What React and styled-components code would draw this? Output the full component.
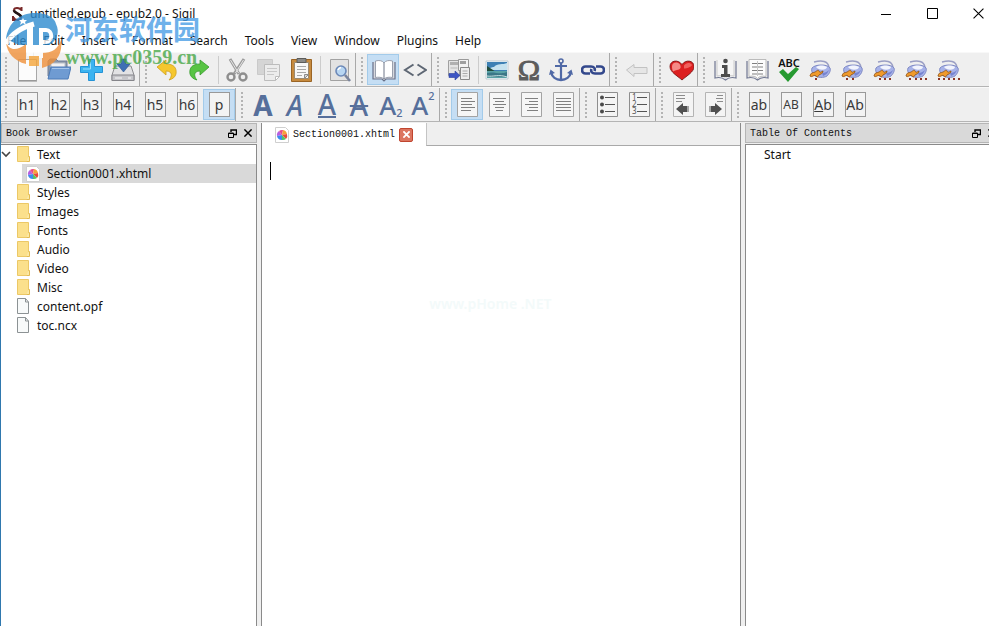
import React from 'react';
import styled, { createGlobalStyle } from 'styled-components';

const GlobalStyle = createGlobalStyle`
    * {
        box-sizing: border-box;
    }
    body {
        margin: 0;
        background: #ffffff;
    }
    button {
        border: 0;
        padding: 0;
        background: none;
        color: inherit;
        font: inherit;
    }
`;

const MENU = ['File', 'Edit', 'Insert', 'Format', 'Search', 'Tools', 'View', 'Window', 'Plugins', 'Help'];
const FOLDERS = ['Styles', 'Images', 'Fonts', 'Audio', 'Video', 'Misc'];
const FILES = ['content.opf', 'toc.ncx'];

/* ---------- icons ---------- */

const Icon = ({ children, size = 24 }) => (
    <svg width={size} height={size} viewBox={`0 0 ${size} ${size}`} fill="none" aria-hidden="true">
        {children}
    </svg>
);

const SigilLogo = () => (
    <svg width="13" height="16" viewBox="0 0 13 16" fill="none" aria-hidden="true">
        <path d="M10.5 1v4M10 4C9 1.5 3 .8 3 4.2c0 3 7 3.300 7 6.800 0 4.200-6.500 3.500-7.500.2M2 10v4.500" stroke="#7a2a2a" strokeWidth="2" />
        <path d="M3 4.200c0 3 7 3.300 7 6.800" stroke="#241818" strokeWidth="2.600" />
        <path d="M1 14.500h4" stroke="#7a2a2a" />
    </svg>
);

const NewIcon = () => (
    <Icon><path d="M3.500 1.500h18v21h-18z" fill="#fcfcfc" stroke="#a8a8a8" /><path d="M3 23h19" stroke="#888" /></Icon>
);

const OpenIcon = () => (
    <Icon>
        <path d="M1 3l2-2h6l2 2h9v15H1z" fill="#8b97a8" stroke="#70809a" />
        <path d="M4 5h14v5H4z" fill="#f1f1f1" stroke="#b8bec8" />
        <path d="M4 9h20l-3 12H1z" fill="#6f9bd2" stroke="#4c7bb8" />
        <path d="M5 10.500h17" stroke="#a9c8ec" />
    </Icon>
);

const AddIcon = () => (
    <Icon>
        <path d="M9.500 1.500h6v7h8v6h-8v8h-6v-8h-8v-6h8z" fill="#3bb3f0" stroke="#2493d6" />
        <path d="M11.500 4v7H4" stroke="#9be0fc" />
    </Icon>
);

const SaveIcon = () => (
    <Icon>
        <path d="M4 8h16l3 9v5.500H1V17z" fill="#e2e2e4" stroke="#8c8c90" />
        <path d="M1 17h22v5.500H1z" fill="#c6c6ca" stroke="#85858a" />
        <path d="M10 1h5v5h4l-6.500 8L6 6h4z" fill="#3f70b4" stroke="#2c568f" strokeWidth=".6" />
        <path d="M4 20h7M17 20h3" stroke="#fafafa" />
    </Icon>
);

const CurvedArrow = ({ fill, edge, flip }) => (
    <Icon>
        <g transform={flip ? 'translate(24 0) scale(-1 1)' : undefined}>
            <path d="M2 9l9-7v4c8 0 11 4 10 10-1 3-3 5-7 6 3-3 4-9-3-9v4z" fill={fill} stroke={edge} strokeWidth=".8" />
        </g>
    </Icon>
);

const CutIcon = () => (
    <Icon>
        <path d="M5 1l9 15M19 1L9 16" stroke="#9c9c9c" strokeWidth="3" />
        <path d="M5.500 2l8 13M18.500 2l-8 13" stroke="#e6e6e6" />
        <circle cx="6" cy="19" r="3.500" stroke="#8e8e8e" strokeWidth="2.400" />
        <circle cx="18" cy="19" r="3.500" stroke="#8e8e8e" strokeWidth="2.400" />
    </Icon>
);

const CopyIcon = () => (
    <Icon>
        <path d="M.5 1.500h15v15H.5z" fill="#d5d5d5" stroke="#cacaca" />
        <path d="M7.500 6.500h15v12l-4 4h-11z" fill="#ececec" stroke="#bcbcbc" />
        <path d="M10 10.500h10M10 13.500h10M10 16.500h7" stroke="#c8c8c8" />
        <path d="M18.500 22.500v-4h4z" fill="#fff" stroke="#bcbcbc" />
    </Icon>
);

const PasteIcon = () => (
    <Icon>
        <path d="M2.500 1.500h20v22h-20z" fill="#c68a3e" stroke="#9a6424" />
        <path d="M5.500 4.500h14v16h-14z" fill="#f7f7f7" stroke="#9c8a70" />
        <path d="M8 .5h9v4H8z" fill="#8a8a88" stroke="#5c5c5a" />
        <path d="M8 8.500h9M8 11.500h9M8 14.500h9M8 17.500h5" stroke="#a8a8a8" />
        <path d="M15.500 20.500v-4h4z" fill="#d8d8d8" stroke="#8d8d8d" />
    </Icon>
);

const FindIcon = () => (
    <Icon>
        <path d="M3.500 1.500h18v21h-18z" fill="#e2e2e2" stroke="#a2a2a2" />
        <circle cx="14" cy="13" r="5" fill="#b8d6f2" stroke="#6c89b8" strokeWidth="1.600" />
        <path d="M11 12a4 4 0 013-2.500" stroke="#fff" strokeWidth="1.500" />
        <path d="M18 17l5 6" stroke="#7a849c" strokeWidth="2.600" />
    </Icon>
);

const BookIcon = () => (
    <Icon size={26}>
        <path d="M3 5v17h9l2 2 2-2h9V5" fill="#d6d8de" stroke="#68718a" strokeWidth="1.200" />
        <path d="M14 22c-2-2-6-2-8.500-1.500V4C9 3 12.500 3.500 14 6c1.500-2.500 5-3 8.500-2v16.500C20 20 16 20 14 22z" fill="#fff" stroke="#9aa0ae" />
        <path d="M14 6v16" stroke="#6f7688" />
    </Icon>
);

const CodeIcon = () => (
    <Icon><path d="M10.500 6.500L2 12l8.500 5.500M14.500 6.500L23 12l-8.500 5.500" stroke="#5d6673" strokeWidth="2" /></Icon>
);

const SplitIcon = () => (
    <Icon>
        <path d="M1.500 2.500h11v15h-11z" fill="#e4e4e4" stroke="#a0a0a0" />
        <path d="M3 4h8v3H3z" fill="#b0b0b0" />
        <path d="M3.500 10h7" stroke="#b8b8b8" />
        <path d="M11.500 1.500h10v11h-10z" fill="#f2f2f2" stroke="#999" />
        <path d="M13 3h6v3h-6z" fill="#9f9f9f" />
        <path d="M13.500 9.500h9v12h-9z" fill="#ececec" stroke="#888" />
        <path d="M15.500 13h5M15.500 15.500h5M15.500 18h5" stroke="#aaa" />
        <path d="M2 15.500h6v-2.500l5 4.500-5 4.500v-2.500H2z" fill="#3e56c4" stroke="#2c3f9c" strokeWidth=".6" />
    </Icon>
);

const ImageIcon = () => (
    <Icon>
        <path d="M1 3h22v18H1z" fill="#f4fafc" stroke="#9fb2bd" strokeWidth=".6" />
        <path d="M2 4h20v9H2z" fill="#3d80b4" />
        <path d="M9 9c3-4 9-2 13-4v7H4c0-2 3-3 5-3z" fill="#c5e2ef" />
        <path d="M2 8l9 6H2z" fill="#214c3d" />
        <path d="M2 13h20v7H2z" fill="#5aa3a6" />
        <path d="M2 15c7-2 13 2 20-1v5H2z" fill="#3b7787" />
        <path d="M2 18c6 1 12-2 20 1" stroke="#c9e5e3" />
    </Icon>
);

const AnchorIcon = () => (
    <Icon>
        <circle cx="12" cy="3" r="2" stroke="#5069a6" strokeWidth="1.600" />
        <path d="M12 5v17M6 8h12" stroke="#5069a6" strokeWidth="2.200" />
        <path d="M2 14c1 5 5 8 10 8s9-3 10-8" stroke="#5069a6" strokeWidth="2.400" />
        <path d="M0 17l1.500-5.500L6 15zM24 17l-1.500-5.500L18 15z" fill="#5069a6" />
    </Icon>
);

const LinkIcon = () => (
    <Icon>
        <path d="M9 15.500H4.500a3.400 3.400 0 010-7H10c3 0 4.500 2 3.500 4.500" stroke="#33488c" strokeWidth="2.600" />
        <path d="M15 8.500h4.500a3.400 3.400 0 010 7H14c-3 0-4.500-2-3.500-4.500" stroke="#33488c" strokeWidth="2.600" />
    </Icon>
);

const BackIcon = () => (
    <Icon><path d="M1.500 12L9 6.500v3h13v6H9v3z" fill="#e6e6e6" stroke="#c2c2c2" /></Icon>
);

const HeartIcon = () => (
    <Icon size={26}>
        <path d="M14 23C9 18.500 2 15 2 9.500c0-6 8-7.500 12-2 4-5.500 12-4 12 2C26 15 19 18.500 14 23z" fill="#dc1f20" stroke="#7d1616" strokeWidth=".9" />
        <path d="M4 9.500c0-4 5-5.500 8-2 1 2 1 4-1 5-3 1-5 1-6 2-.7-2-1-3-1-5z" fill="#f58a86" />
        <path d="M16 8.500c2-3 6-3.500 8-.5-1 2-5 3.500-8 3.500z" fill="#f0605c" />
    </Icon>
);

const InfoIcon = () => (
    <Icon>
        <path d="M2 3v17c4-1 7-1 10.500 2C16 19 19 19 23 20V3" fill="#eeeef0" stroke="#6f7690" strokeWidth="1.200" />
        <path d="M4 2v16c4-1 7 0 8.500 2 1.500-2 4.500-3 8.500-2V2" fill="#f5f5f5" stroke="#ccc" />
        <circle cx="12.500" cy="3" r="2.300" fill="#4c4c4c" />
        <path d="M9 7h5.500v9H17v3H8v-3h3v-6H9z" fill="#4c4c4c" />
    </Icon>
);

const TocIcon = () => (
    <Icon>
        <path d="M2 3v17c4-1 7-1 10.500 2C16 19 19 19 23 20V3" fill="#eeeef0" stroke="#6f7690" strokeWidth="1.200" />
        <path d="M4 1.500h17v17c-4-1-7 0-8.500 2-1.500-2-4.500-3-8.500-2z" fill="#fcfcfc" stroke="#bbb" />
        <path d="M7 5.500h11M7 9h11M7 12.500h11M7 16h11" stroke="#808080" />
        <path d="M12.500 3v15" stroke="#c8c8c8" />
    </Icon>
);

const CheckMark = () => (
    <svg width="22" height="15" viewBox="0 0 22 15" fill="none" aria-hidden="true">
        <path d="M1 5l4-3 5 5 8-7 3 2-11 13z" fill="#279a31" />
    </svg>
);

const DOTS = { 1: [6], 2: [5, 11], 3: [6, 11, 16], 4: [4, 10, 15, 20], 5: [1, 6, 11, 16, 21] };

const PluginIcon = ({ count }) => (
    <Icon>
        <path d="M5 4c8-2 14-1 15 5" stroke="#9a9ec4" strokeWidth="1.400" />
        <path d="M3 10c3-4 16-4 18 0 1 3-1 6-3 8-3 2-10 2-13-1-2-2-3-5-2-7z" fill="#a7b2e8" stroke="#7e89c4" />
        <path d="M7 9c3-2 8-2 11 0 0 3-8 4-11 0z" fill="#f2f4fd" />
        <path d="M13 15c3 0 5-1 7-3-1 3-3 5-6 6z" fill="#7684d0" />
        <path d="M1 18c1-4 3-3 5-4s3-3 4-1 2 1 4 0c0 3-3 3-4 4s-1 3-3 1-4 2-6 0z" fill="#f09a2c" stroke="#8e5318" strokeWidth=".9" />
        {DOTS[count].map((x) => <path key={x} d={`M${x} 20h2v2h-2z`} fill="#8a3324" />)}
    </Icon>
);

const ALIGN_LINES = {
    left: [[4, 15], [4, 18], [4, 15], [4, 18], [4, 14]],
    center: [[4, 17], [6, 15], [4, 17], [6, 15], [7, 14]],
    right: [[4, 17], [8, 17], [4, 17], [8, 17], [6, 17]],
    justify: [[3, 18], [3, 18], [3, 18], [3, 18], [3, 18]],
};

const AlignIcon = ({ kind }) => (
    <svg width="21" height="25" viewBox="0 0 21 25" fill="none" aria-hidden="true">
        <path d="M.5.5h20v24H.5z" fill="#f6f6f6" stroke="#a3a3a3" />
        {ALIGN_LINES[kind].map(([from, to], i) => (
            <path key={i} d={`M${from} ${6.5 + i * 3}H${to}`} stroke="#808080" />
        ))}
    </svg>
);

const ListIcon = ({ numbered }) => (
    <svg width="21" height="25" viewBox="0 0 21 25" fill="none" aria-hidden="true">
        <path d="M.5.5h20v24H.5z" fill="#f4f4f4" stroke="#8e8e8e" />
        {[5, 12, 19].map((y) => (
            <path key={y} d={`M8 ${y + 0.5}h10`} stroke="#555" />
        ))}
        {!numbered && [5, 12, 19].map((y) => (
            <circle key={y} cx="5" cy={y + 0.5} r="2" fill="#4a4a4a" />
        ))}
        {numbered && [1, 2, 3].map((n) => (
            <text key={n} x="3" y={n * 7 + 1} fontSize="8" fontFamily="Noto Sans, sans-serif" fill="#555">{n}</text>
        ))}
    </svg>
);

const IndentIcon = ({ out }) => (
    <svg width="21" height="25" viewBox="0 0 21 25" fill="none" aria-hidden="true">
        <path d="M.5.5h20v24H.5z" fill="#f4f4f4" stroke="#b4b4b4" />
        <path d={out ? 'M3 3.500h9M3 6.500h9M3 9.500h6' : 'M12 3.500h6M11 6.500h7M12 9.500h6'} stroke="#8c8c8c" />
        <path d={out ? 'M3 17l7-6v3h4v6h-4v3z' : 'M17 17l-7-6v3H6v6h4v3z'} fill="#505050" />
        <path d={out ? 'M14 14h2v6h-2z' : 'M4 14h2v6H4z'} fill="#a4a4a4" />
    </svg>
);

const FolderIcon = () => (
    <svg width="14" height="17" viewBox="0 0 14 17" fill="none" aria-hidden="true">
        <path d="M.5.5h11v15H.5z" fill="#fbe08c" stroke="#ecc866" />
        <path d="M11.500 10.500h1v5H9.500" fill="#fbe9a9" stroke="#e3ba52" />
    </svg>
);

const FileIcon = () => (
    <svg width="14" height="17" viewBox="0 0 14 17" fill="none" aria-hidden="true">
        <path d="M.5.5h8l3 3.500v11.500H.5z" fill="#f8fafa" stroke="#8c9294" />
        <path d="M8.500.5V4h3" stroke="#8c9294" />
    </svg>
);

const HtmlIcon = () => (
    <svg width="14" height="16" viewBox="0 0 14 16" fill="none" aria-hidden="true">
        <path d="M.5.5h10l3 3v12H.5z" fill="#fff" stroke="#cfcfcf" />
        <path d="M7 8L2 9a5 5 0 012-5z" fill="#b95fe0" />
        <path d="M7 8L4 4a5 5 0 014-1z" fill="#e8488a" />
        <path d="M7 8l1-5a5 5 0 014 4z" fill="#f5a13a" />
        <path d="M7 8l5-1a5 5 0 01-1 5z" fill="#e84a3c" />
        <path d="M7 8l4 4a5 5 0 01-4 1z" fill="#54c468" />
        <path d="M7 8v5a5 5 0 01-5-4z" fill="#3c8af0" />
    </svg>
);

const FloatIcon = () => (
    <svg width="9" height="9" viewBox="0 0 9 9" fill="none" aria-hidden="true">
        <path d="M3 3V1h5.500v4.500H6" stroke="#000" strokeWidth="1.400" />
        <path d="M.5 4h5v4.500h-5zM.5 4.500h5" stroke="#000" />
    </svg>
);

const CrossIcon = ({ size, weight, color = '#000' }) => (
    <svg width={size} height={size} viewBox="0 0 10 10" fill="none" aria-hidden="true">
        <path d="M.5.5l9 9M9.500.5l-9 9" stroke={color} strokeWidth={weight} />
    </svg>
);

/* ---------- building blocks ---------- */

const Tool = ({ label, active, children }) => (
    <ToolButton type="button" aria-label={label} aria-pressed={active} $active={active}>{children}</ToolButton>
);

const DockHeader = ({ title, $clipped }) => (
    <Header $clipped={$clipped}>
        <HeaderTitle>{title}</HeaderTitle>
        <HeaderButton type="button" aria-label={`Float ${title}`}><FloatIcon /></HeaderButton>
        <HeaderButton type="button" aria-label={`Close ${title}`}><CrossIcon size={8} weight={1.8} /></HeaderButton>
    </Header>
);

const Watermark = () => (
    <Mark aria-hidden="true">
        <svg width="57" height="58" viewBox="0 0 57 58" fill="none">
            <path d="M1 27C3 10 16 0 32 1c10 0 18 5 19 11 4 8 1 17-7 21H14L1 27z" fill="#2e8bcf" />
            <path d="M1 30c3 9 11 9 20 2v20C9 49 2 41 1 30z" fill="#f0913a" />
            <path d="M37 41c10 0 16-4 19-13 2 14-5 25-19 28z" fill="#f0913a" />
            <path d="M1 32c5-10 14-16 28-20" stroke="#fff" strokeWidth="5" />
            <path d="M25 12v32" stroke="#fff" strokeWidth="6" />
            <path d="M36 46V18h5c7 0 7 12 0 12h-5" stroke="#fff" strokeWidth="4" />
            <path d="M29 33h5v11h-5z" fill="#fff" />
            <path d="M24 44h10v10H24z" fill="#f5a53a" />
            <path d="M18 6l1 2h3l-2 2 1 3-3-2-3 2 1-3-2-2h3z" fill="#fff" />
        </svg>
        <MarkText>
            <MarkName>河东软件园</MarkName>
            <MarkUrl>www.pc0359.cn</MarkUrl>
        </MarkText>
    </Mark>
);

const App = () => {
    return (
        <Window>
            <GlobalStyle />
            <TitleBar>
                <SigilLogo />
                <Title>untitled.epub - epub2.0 - Sigil</Title>
                <WindowButton type="button" aria-label="Minimize">
                    <svg width="10" height="10" aria-hidden="true"><path d="M0 5.500h10" stroke="#000" /></svg>
                </WindowButton>
                <WindowButton type="button" aria-label="Maximize">
                    <svg width="11" height="11" aria-hidden="true"><path d="M.5.5h10v10H.5z" fill="none" stroke="#000" /></svg>
                </WindowButton>
                <WindowButton type="button" aria-label="Close"><CrossIcon size={11} weight={1} /></WindowButton>
            </TitleBar>
            <MenuBar>
                {MENU.map((item) => <MenuItem key={item} type="button">{item}</MenuItem>)}
            </MenuBar>

            <Toolbar>
                <Group>
                    <Tool label="New"><NewIcon /></Tool>
                    <Tool label="Open"><OpenIcon /></Tool>
                    <Tool label="Add"><AddIcon /></Tool>
                    <Tool label="Save"><SaveIcon /></Tool>
                </Group>
                <Group>
                    <Tool label="Undo"><CurvedArrow fill="#f5c72e" edge="#cf9f1c" /></Tool>
                    <Tool label="Redo"><CurvedArrow fill="#57c443" edge="#379a2c" flip /></Tool>
                    <Separator />
                    <Tool label="Cut"><CutIcon /></Tool>
                    <Tool label="Copy"><CopyIcon /></Tool>
                    <Tool label="Paste"><PasteIcon /></Tool>
                    <Separator />
                    <Tool label="Find"><FindIcon /></Tool>
                </Group>
                <Group>
                    <Tool label="Book view" active><BookIcon /></Tool>
                    <Tool label="Code view"><CodeIcon /></Tool>
                </Group>
                <Group>
                    <Tool label="Split at cursor"><SplitIcon /></Tool>
                    <Separator />
                    <Tool label="Insert image"><ImageIcon /></Tool>
                    <Tool label="Special character"><Omega>Ω</Omega></Tool>
                    <Tool label="Insert anchor"><AnchorIcon /></Tool>
                    <Tool label="Insert link"><LinkIcon /></Tool>
                </Group>
                <Group>
                    <Tool label="Back"><BackIcon /></Tool>
                </Group>
                <Group>
                    <Tool label="Donate"><HeartIcon /></Tool>
                </Group>
                <Group $last>
                    <Tool label="Metadata editor"><InfoIcon /></Tool>
                    <Tool label="Generate table of contents"><TocIcon /></Tool>
                    <Tool label="Spellcheck"><Spell><SpellText>ABC</SpellText><CheckMark /></Spell></Tool>
                    {[1, 2, 3, 4, 5].map((n) => (
                        <Tool key={n} label={`Plugin ${n}`}><PluginIcon count={n} /></Tool>
                    ))}
                </Group>
            </Toolbar>

            <Toolbar>
                <Group>
                    {['h1', 'h2', 'h3', 'h4', 'h5', 'h6'].map((h) => (
                        <Tool key={h} label={h}><Tile>{h}</Tile></Tool>
                    ))}
                    <Tool label="p" active><Tile>p</Tile></Tool>
                </Group>
                <Group>
                    <Tool label="Bold"><Letter $bold>A</Letter></Tool>
                    <Tool label="Italic"><Letter $italic>A</Letter></Tool>
                    <Tool label="Underline"><Letter $line="bottom">A</Letter></Tool>
                    <Tool label="Strikethrough"><Letter $line="middle">A</Letter></Tool>
                    <Tool label="Subscript"><Letter $small>A</Letter><Script $low>2</Script></Tool>
                    <Tool label="Superscript"><Letter $small>A</Letter><Script>2</Script></Tool>
                </Group>
                <Group>
                    <Tool label="Align left" active><AlignIcon kind="left" /></Tool>
                    <Tool label="Center"><AlignIcon kind="center" /></Tool>
                    <Tool label="Align right"><AlignIcon kind="right" /></Tool>
                    <Tool label="Justify"><AlignIcon kind="justify" /></Tool>
                </Group>
                <Group>
                    <Tool label="Bulleted list"><ListIcon /></Tool>
                    <Tool label="Numbered list"><ListIcon numbered /></Tool>
                </Group>
                <Group>
                    <Tool label="Decrease indent"><IndentIcon out /></Tool>
                    <Tool label="Increase indent"><IndentIcon /></Tool>
                </Group>
                <Group $last>
                    <Tool label="Lowercase"><Tile>ab</Tile></Tool>
                    <Tool label="Uppercase"><Tile $small>AB</Tile></Tool>
                    <Tool label="Title case"><Tile><u>A</u>b</Tile></Tool>
                    <Tool label="Capitalize"><Tile>Ab</Tile></Tool>
                </Group>
            </Toolbar>

            <Workspace>
                <Dock>
                    <DockHeader title="Book Browser" />
                    <Tree>
                        <Row>
                            <Toggle type="button" aria-label="Collapse Text">
                                <svg width="10" height="7" fill="none" aria-hidden="true"><path d="M1 1l4 4 4-4" stroke="#444" strokeWidth="1.600" /></svg>
                            </Toggle>
                            <FolderIcon />Text
                        </Row>
                        <Row $child><Selected><HtmlIcon />Section0001.xhtml</Selected></Row>
                        {FOLDERS.map((name) => <Row key={name}><Indent /><FolderIcon />{name}</Row>)}
                        {FILES.map((name) => <Row key={name}><Indent /><FileIcon />{name}</Row>)}
                    </Tree>
                </Dock>

                <Editor>
                    <TabStrip>
                        <Tab>
                            <HtmlIcon />
                            Section0001.xhtml
                            <CloseTab type="button" aria-label="Close tab"><CrossIcon size={7} weight={2.6} color="#fff" /></CloseTab>
                        </Tab>
                        <TabFiller />
                    </TabStrip>
                    <Page>
                        <Caret />
                        <PageText aria-label="Section0001.xhtml" spellCheck={false} />
                        <PageMark aria-hidden="true">www.pHome .NET</PageMark>
                    </Page>
                </Editor>

                <Dock>
                    <DockHeader title="Table Of Contents" $clipped />
                    <Tree $open>
                        <Row><TocEntry href="#start">Start</TocEntry></Row>
                    </Tree>
                </Dock>
            </Workspace>
            <Watermark />
        </Window>
    );
}

/* ---------- window frame ---------- */

const Window = styled.div`
    position: relative;
    display: flex;
    flex-direction: column;
    height: 100vh;
    overflow: hidden;
    border-left: 1px solid #2f78ae;
    background: #efefef;
    color: #111111;
    font-family: "Noto Sans", "Noto Sans CJK SC", sans-serif;
    font-size: 12px;
    line-height: 19px;
`;

const TitleBar = styled.header`
    display: flex;
    align-items: center;
    height: 27px;
    padding-left: 10px;
    background: #ffffff;
`;

const Title = styled.h1`
    flex: 1;
    margin: 0;
    padding-left: 6px;
    font-size: 12px;
    font-weight: 400;
`;

const WindowButton = styled.button`
    display: flex;
    align-items: center;
    justify-content: center;
    width: 46px;
    height: 26px;

    &:last-child {
        justify-content: flex-end;
        width: 34px;
        padding-right: 5px;
    }
`;

const MenuBar = styled.nav`
    display: flex;
    align-items: center;
    gap: 17px;
    height: 25px;
    padding: 2px 0 0 6px;
    background: #ffffff;
`;

const MenuItem = styled.button`
    white-space: nowrap;
`;

/* ---------- toolbars ---------- */

const Toolbar = styled.div`
    display: flex;
    flex: none;
    height: 35px;
    border-bottom: 1px solid #b4b4b4;
    border-top: 1px solid #f8f8f8;
`;

const Group = styled.div`
    display: flex;
    align-items: center;
    flex: none;
    border-right: ${props => props.$last ? 'none' : '1px solid #a9a9a9'};
    margin-right: 1px;

    &::before {
        content: '';
        width: 2px;
        height: 26px;
        margin: 0 4px;
        background: repeating-linear-gradient(#b4b4b4 0 2px, transparent 2px 4px);
    }
`;

const ToolButton = styled.button`
    display: flex;
    align-items: center;
    justify-content: center;
    width: 32px;
    height: 31px;
    background: ${props => props.$active ? '#c5def4' : 'transparent'};
    border: 1px solid ${props => props.$active ? '#a3cbea' : 'transparent'};
`;

const Separator = styled.span`
    width: 1px;
    height: 28px;
    margin: 0 2px 0 3px;
    background: #cccccc;
`;

const Tile = styled.span`
    display: flex;
    align-items: center;
    justify-content: center;
    flex: none;
    width: 21px;
    height: 25px;
    border: 1px solid #999999;
    background: #f3f3f3;
    color: #3a3a3a;
    font-size: ${props => props.$small ? '12px' : '14px'};
`;

const Letter = styled.span`
    color: #566f9b;
    font-size: ${props => props.$small ? '26px' : '28px'};
    line-height: 24px;
    font-weight: ${props => props.$bold ? 700 : 500};
    font-style: ${props => props.$italic ? 'italic' : 'normal'};
    border-bottom: ${props => props.$line === 'bottom' ? '2px solid #566f9b' : 'none'};
    text-decoration: ${props => props.$line === 'middle' ? 'line-through 2px' : 'none'};
`;

const Script = styled.span`
    align-self: ${props => props.$low ? 'flex-end' : 'flex-start'};
    color: #566f9b;
    font-size: 11px;
    font-weight: 500;
    line-height: 12px;
`;

const Omega = styled.span`
    color: #5c5c5c;
    font-family: "Liberation Serif", serif;
    font-size: 30px;
    line-height: 28px;
    -webkit-text-stroke: 1px #5c5c5c;
`;

const Spell = styled.span`
    display: flex;
    flex-direction: column;
    align-items: center;
`;

const SpellText = styled.span`
    height: 9px;
    color: #111111;
    font-size: 11px;
    font-weight: 600;
    line-height: 9px;
`;

/* ---------- panels ---------- */

const Workspace = styled.main`
    display: grid;
    grid-template-columns: 256px minmax(0, 1fr) 244px;
    column-gap: 4px;
    flex: 1;
    min-height: 0;
    padding-top: 1px;
`;

const Dock = styled.section`
    display: flex;
    flex-direction: column;
    gap: 1px;
    min-width: 0;
    overflow: hidden;
`;

const Header = styled.div`
    display: flex;
    align-items: center;
    flex: none;
    height: 20px;
    margin-right: ${props => props.$clipped ? '-12px' : '0'};
    padding: 0 0 0 4px;
    border: 1px solid #b5b5b5;
    background: #d9d9d9;
    font-family: "Liberation Mono", monospace;
    font-size: 10px;
`;

const HeaderTitle = styled.h2`
    flex: 1;
    margin: 0;
    font-size: 10px;
    font-weight: 400;
`;

const HeaderButton = styled.button`
    display: flex;
    justify-content: center;
    width: 16px;
`;

const Tree = styled.ul`
    flex: 1;
    margin: 0;
    padding: 0;
    list-style: none;
    background: #ffffff;
    border: solid #8a8a8a;
    border-width: ${props => props.$open ? '1px 0 0 1px' : '1px 1px 0 0'};
`;

const Row = styled.li`
    display: flex;
    align-items: center;
    gap: 6px;
    height: 19px;
    padding-left: ${props => props.$child ? '21px' : '0'};
`;

const Toggle = styled.button`
    display: flex;
    width: 10px;
`;

const Indent = styled.span`
    width: 10px;
`;

const Selected = styled.span`
    display: flex;
    align-items: center;
    gap: 7px;
    flex: 1;
    padding-left: 4px;
    background: #d9d9d9;
`;

const TocEntry = styled.a`
    padding-left: 18px;
    color: inherit;
    text-decoration: none;
`;

/* ---------- editor ---------- */

const Editor = styled.section`
    display: flex;
    flex-direction: column;
    min-width: 0;
    border: solid #8a8a8a;
    border-width: 0 1px;
    background: #ffffff;
`;

const TabStrip = styled.div`
    display: flex;
    flex: none;
    height: 23px;
`;

const Tab = styled.div`
    display: flex;
    align-items: center;
    gap: 4px;
    padding: 0 13px;
    font-family: "Liberation Mono", monospace;
    font-size: 10px;
`;

const TabFiller = styled.div`
    flex: 1;
    border-left: 1px solid #c4c4c4;
    border-bottom: 1px solid #a9a9a9;
    background: #efefef;
`;

const CloseTab = styled.button`
    display: flex;
    align-items: center;
    justify-content: center;
    width: 14px;
    height: 14px;
    border: 1px solid #c0452f;
    border-radius: 2px;
    background: #dc7560;
`;

const Page = styled.div`
    position: relative;
    display: flex;
    flex: 1;
    padding: 16px 8px;
`;

const Caret = styled.span`
    width: 1px;
    height: 18px;
    background: #000000;
`;

const PageText = styled.textarea`
    flex: 1;
    border: 0;
    padding: 0;
    outline: none;
    resize: none;
    background: transparent;
    font: 16px "Liberation Serif", serif;
    caret-color: transparent;
`;

const PageMark = styled.span`
    position: absolute;
    top: 148px;
    left: 35%;
    color: #f3fafa;
    font-size: 14px;
    font-weight: 600;
`;

/* ---------- site watermark ---------- */

const Mark = styled.div`
    position: absolute;
    top: 12px;
    left: 4px;
    display: flex;
    gap: 3px;
    opacity: 0.8;
    pointer-events: none;
`;

const MarkText = styled.div`
    display: flex;
    flex-direction: column;
`;

const MarkName = styled.span`
    color: #4a9ee6;
    font-family: "Noto Sans CJK SC", sans-serif;
    font-size: 27px;
    font-weight: 700;
    line-height: 34px;
`;

const MarkUrl = styled.span`
    color: #4aa84a;
    font-family: "Liberation Serif", serif;
    font-size: 20px;
    font-weight: 700;
    line-height: 22px;
`;

export default App;
